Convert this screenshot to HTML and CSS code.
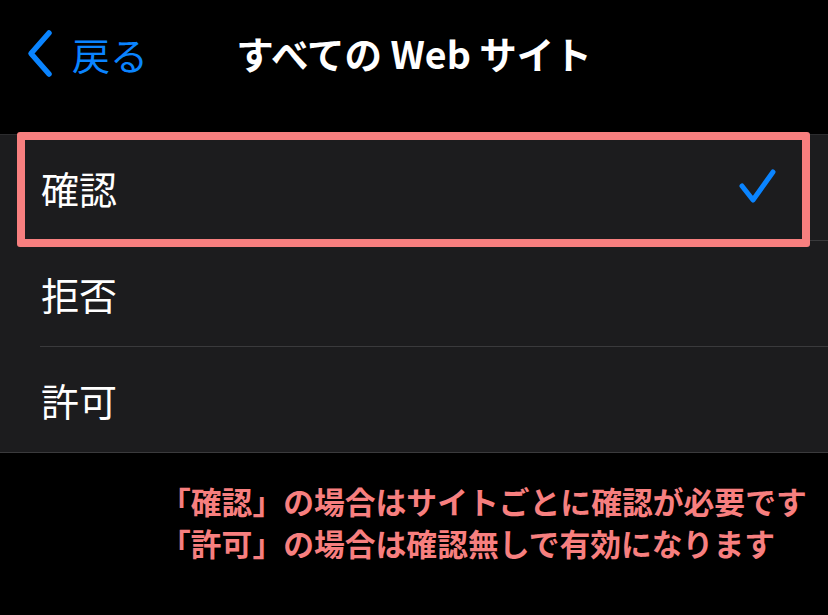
FILE: index.html
```html
<html>
  <head>
    <meta http-equiv="Content-Type" content="text/html; charset=utf-8" />
    <title>すべての Web サイト</title>
    <link rel="stylesheet" href="styles.css">
  </head>
  <body>
    <div class="nav">
      <div class="back">
        <svg class="chevron" width="30" height="50" viewBox="0 0 30 50">
          <polyline points="23,4 5,24.5 23,45" />
        </svg>
        <span>戻る</span>
      </div>
      <div class="title">すべての Web サイト</div>
      <div></div>
    </div>

    <ul class="list">
      <li class="row selected">
        <div class="cell">
          <span>確認</span>
          <svg class="check" width="40" height="40" viewBox="0 0 40 40">
            <polyline points="4,18 15,32 35,4" />
          </svg>
        </div>
        <div class="mark"></div>
      </li>
      <li class="row"><div class="cell"><span>拒否</span></div></li>
      <li class="row last"><div class="cell"><span>許可</span></div></li>
    </ul>

    <div class="note">
      「確認」の場合はサイトごとに確認が必要です<br/>
      「許可」の場合は確認無しで有効になります
    </div>
  </body>
</html>
```

FILE: styles.css
```css
body {
    margin: 0;
    background: #000;
    font-family: "Noto Sans CJK JP", "Noto Sans", sans-serif;
    color: #fff;
}

.nav {
    height: 134px;
    display: grid;
    grid-template-columns: 1fr auto 1fr;
    align-items: start;
    padding-top: 28px;
    box-sizing: border-box;
}
.back {
    display: flex;
    align-items: center;
    height: 50px;
    padding-left: 26px;
    margin-top: 1px;
    color: #0a84ff;
    font-size: 38px;
}
.back span {
    margin-left: 16px;
    line-height: 50px;
}
.chevron polyline {
    fill: none;
    stroke: #0a84ff;
    stroke-width: 5.5;
    stroke-linecap: round;
    stroke-linejoin: round;
}
.title {
    font-size: 37.5px;
    font-weight: bold;
    line-height: 50px;
}

.list {
    list-style-type: none;
    margin: 0;
    padding: 0;
    background: #1c1c1e;
    border-top: 1px solid #2c2c2e;
    border-bottom: 1px solid #3a3a3c;
}
.row {
    position: relative;
    padding-left: 40px;
}
.cell {
    height: 105px;
    display: flex;
    align-items: center;
    justify-content: space-between;
    padding-right: 50px;
    border-bottom: 1px solid #3a3a3c;
    font-size: 38px;
}
.row.last .cell {
    border-bottom: none;
}
.cell span {
    margin-left: 1px;
}
.check polyline {
    fill: none;
    stroke: #0a84ff;
    stroke-width: 5;
    stroke-linecap: round;
    stroke-linejoin: round;
}
.mark {
    position: absolute;
    top: -3px;
    left: 17px;
    right: 18px;
    bottom: -6px;
    border: 8px solid #f77f7f;
    border-radius: 3px;
}

.note {
    margin-top: 27px;
    padding-left: 160px;
    color: #f77f7f;
    font-size: 30.8px;
    font-weight: bold;
    line-height: 42px;
}
```
